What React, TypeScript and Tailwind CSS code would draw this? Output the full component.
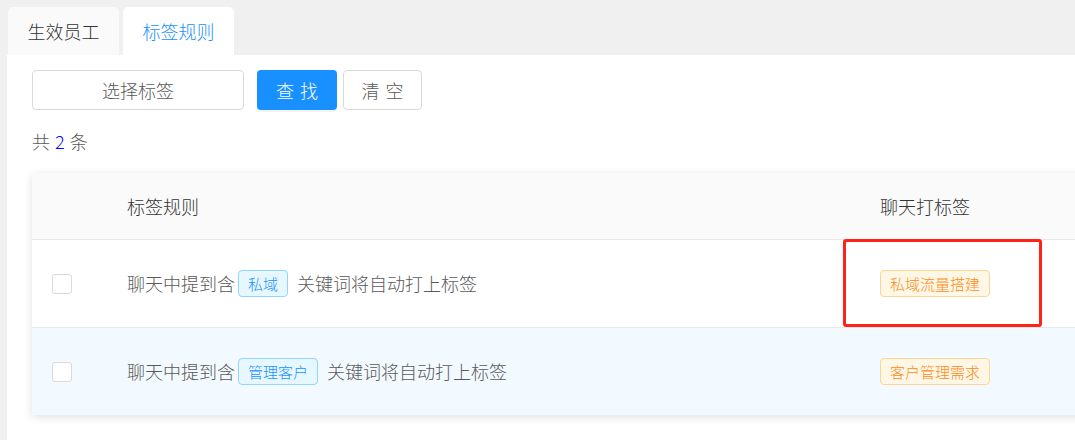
import React from "react";

const font = { fontFamily: '"Noto Sans CJK SC", "Noto Sans", sans-serif' };

function BlueTag({ children }: { children: React.ReactNode }) {
  return (
    <span className="ml-[3px] mr-[9px] inline-flex h-[27px] items-center rounded-[4px] border border-[#91d5ff] bg-[#e6f7ff] px-[9px] text-[15px] leading-none text-[#1890ff]">
      {children}
    </span>
  );
}

function OrangeTag({ children }: { children: React.ReactNode }) {
  return (
    <span className="inline-flex h-[27px] items-center rounded-[4px] border border-[#ffd591] bg-[#fff7e6] px-[9px] text-[15px] leading-none text-[#fa8c16]">
      {children}
    </span>
  );
}

function Checkbox() {
  return (
    <div className="w-[95px] pl-[20px]">
      <div className="h-[20px] w-[20px] rounded-[3px] border border-[#d9d9d9] bg-white" />
    </div>
  );
}

export default function App() {
  return (
    <div className="h-[440px] overflow-hidden bg-[#f0f0f0] pl-[7px] pt-[7px] font-light" style={font}>
      <div className="flex gap-[4px] pl-[1px]">
        <div className="flex h-[48px] w-[111px] items-center justify-center rounded-t-[5px] bg-[#fafafa] text-[18px] text-[#333]">
          生效员工
        </div>
        <div className="flex h-[48px] w-[111px] items-center justify-center rounded-t-[5px] bg-white text-[18px] text-[#1890ff]">
          标签规则
        </div>
      </div>
      <div className="h-[400px] overflow-hidden bg-white pl-[25px] pt-[15px]">
        <div className="flex h-[40px] items-stretch">
          <div className="flex w-[212px] items-center justify-center rounded-[4px] border border-[#d9d9d9] text-[18px] text-[#595959]">
            选择标签
          </div>
          <div className="ml-[13px] flex w-[80px] items-center justify-center gap-[6px] rounded-[4px] bg-[#1890ff] text-[18px] text-white shadow-[0_2px_0_rgba(0,0,0,0.045)]">
            <span>查</span>
            <span>找</span>
          </div>
          <div className="ml-[6px] flex w-[79px] items-center justify-center gap-[6px] rounded-[4px] border border-[#d9d9d9] text-[18px] text-[#595959]">
            <span>清</span>
            <span>空</span>
          </div>
        </div>
        <div className="mt-[19px] flex h-[24px] items-center gap-[5px] text-[18px] leading-[24px] text-[#595959]">
          <span>共</span>
          <span className="text-[#0000ff]">2</span>
          <span>条</span>
        </div>
        <div className="relative mt-[20px] w-[1080px] rounded-t-[3px] bg-white shadow-[0_2px_10px_rgba(0,0,0,0.12)]">
          <div className="flex h-[67px] items-center border-b border-[#e8e8e8] bg-[#fafafa] text-[18px] text-[#333]">
            <div className="w-[95px]" />
            <div className="w-[753px]">标签规则</div>
            <div>聊天打标签</div>
          </div>
          <div className="flex h-[88px] items-center border-b border-[#e8e8e8] bg-white">
            <Checkbox />
            <div className="flex w-[753px] items-center text-[18px] text-[#595959]">
              <span>聊天中提到含</span>
              <BlueTag>私域</BlueTag>
              <span>关键词将自动打上标签</span>
            </div>
            <div className="flex items-center">
              <OrangeTag>私域流量搭建</OrangeTag>
            </div>
          </div>
          <div className="flex h-[87px] items-center bg-[#f3faff]">
            <Checkbox />
            <div className="flex w-[753px] items-center text-[18px] text-[#595959]">
              <span>聊天中提到含</span>
              <BlueTag>管理客户</BlueTag>
              <span>关键词将自动打上标签</span>
            </div>
            <div className="flex items-center">
              <OrangeTag>客户管理需求</OrangeTag>
            </div>
          </div>
          <div className="absolute left-[811px] top-[66px] h-[88px] w-[199px] rounded-[3px] border-[3px] border-[#ff2218]" />
        </div>
      </div>
    </div>
  );
}
